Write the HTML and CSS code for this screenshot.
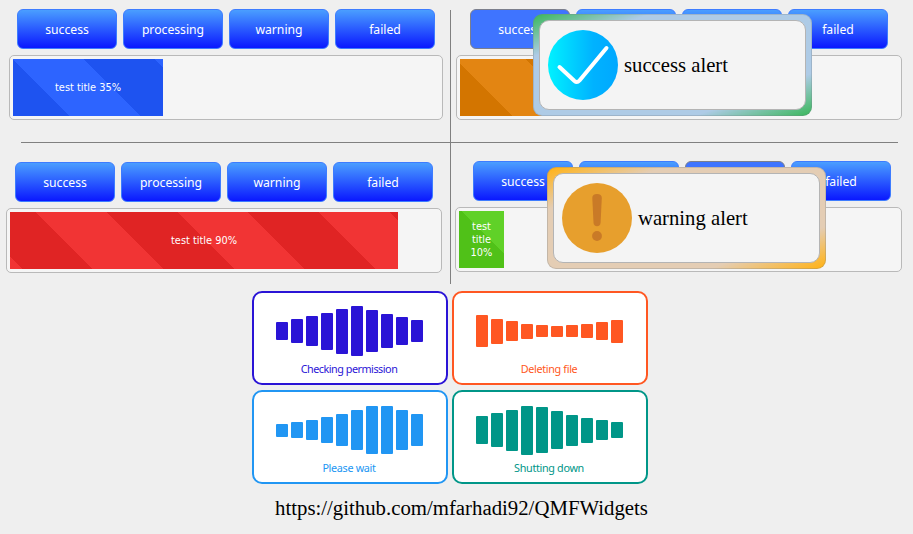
FILE: index.html
```html
<!DOCTYPE html>
<html lang="en">
<head>
<meta charset="utf-8">
<title>QMFWidgets</title>
<link rel="stylesheet" href="styles.css">
</head>
<body>
<main class="window">
  <div class="panels">
    <section class="panel panel-a">
      <div class="buttons"><button>success</button><button>processing</button><button>warning</button><button>failed</button></div>
      <div class="track"><div class="bar blue"><span>test title 35%</span></div></div>
    </section>
    <section class="panel panel-b">
      <div class="buttons"><button class="active">success</button><button>processing</button><button>warning</button><button>failed</button></div>
      <div class="track"><div class="bar orange"></div></div>
      <div class="alert alert-success">
        <div class="alert-body">
          <svg width="70" height="70" viewBox="0 0 70 70">
            <defs><linearGradient id="cyan"><stop offset="0" stop-color="#00f2ff"/><stop offset=".65" stop-color="#00b2ff"/><stop offset="1" stop-color="#00a8ff"/></linearGradient></defs>
            <circle cx="35" cy="35" r="35" fill="url(#cyan)"/>
            <path d="M11.5 37 L26.5 51 Q29 53.2 31.5 50.5 L58.5 18" fill="none" stroke="#fff" stroke-width="4" stroke-linecap="round" stroke-linejoin="round"/>
          </svg>
          <span>success alert</span>
        </div>
      </div>
    </section>
    <section class="panel panel-c">
      <div class="buttons"><button>success</button><button>processing</button><button>warning</button><button>failed</button></div>
      <div class="track"><div class="bar red"><span>test title 90%</span></div></div>
    </section>
    <section class="panel panel-d">
      <div class="buttons"><button>success</button><button>processing</button><button class="active">warning</button><button>failed</button></div>
      <div class="track"><div class="bar green"><span>test<br>title<br>10%</span></div></div>
      <div class="alert alert-warning">
        <div class="alert-body">
          <svg width="70" height="70" viewBox="0 0 70 70">
            <circle cx="35" cy="35" r="35" fill="#e79f2d"/>
            <path d="M30.3 15 Q30.3 11 35 11 Q39.8 11 39.8 15 L38.6 39.5 Q38.3 43.3 35 43.3 Q31.8 43.3 31.5 39.5 Z" fill="#c97a27"/>
            <circle cx="35" cy="53" r="4.9" fill="#c97a27"/>
          </svg>
          <span>warning alert</span>
        </div>
      </div>
    </section>
    <i class="rule-h"></i>
    <i class="rule-v"></i>
  </div>
  <div class="cards">
    <div class="card indigo">
      <div class="wave"><i style="height:18.7px"></i><i style="height:24px"></i><i style="height:30.3px"></i><i style="height:37px"></i><i style="height:45px"></i><i style="height:49.3px"></i><i style="height:41.3px"></i><i style="height:34.7px"></i><i style="height:27.3px"></i><i style="height:21.3px"></i></div>
      <p>Checking permission</p>
    </div>
    <div class="card coral">
      <div class="wave"><i style="height:31.3px"></i><i style="height:25px"></i><i style="height:19.3px"></i><i style="height:15px"></i><i style="height:12.7px"></i><i style="height:11px"></i><i style="height:12.3px"></i><i style="height:14.7px"></i><i style="height:17.7px"></i><i style="height:23px"></i></div>
      <p>Deleting file</p>
    </div>
    <div class="card sky">
      <div class="wave"><i style="height:13px"></i><i style="height:15.7px"></i><i style="height:20.3px"></i><i style="height:25.7px"></i><i style="height:32.7px"></i><i style="height:39.3px"></i><i style="height:47.3px"></i><i style="height:47.3px"></i><i style="height:39.3px"></i><i style="height:32.7px"></i></div>
      <p>Please wait</p>
    </div>
    <div class="card teal">
      <div class="wave"><i style="height:27.3px"></i><i style="height:33.3px"></i><i style="height:41px"></i><i style="height:49px"></i><i style="height:45.7px"></i><i style="height:38px"></i><i style="height:31px"></i><i style="height:25px"></i><i style="height:19.3px"></i><i style="height:15.3px"></i></div>
      <p>Shutting down</p>
    </div>
  </div>
  <footer>https://github.com/mfarhadi92/QMFWidgets</footer>
</main>
</body>
</html>
```
FILE: styles.css
```css
* { box-sizing: border-box; }
body {
  margin: 0;
  background: #efefef;
  font-family: "Noto Sans", "DejaVu Sans", sans-serif;
}
.window { width: 913px; height: 534px; overflow: hidden; }

.panels {
  position: relative;
  display: grid;
  grid-template-columns: 450px 463px;
  grid-template-rows: 142px 149px;
}
.panel { position: relative; }
.panel-a { padding: 9px 7px 0 9px; }
.panel-b { padding: 9px 11px 0 6px; }
.panel-c { padding: 20px 8px 0 6px; }
.panel-d { padding: 19px 11px 0 5px; }
.rule-h, .rule-v { position: absolute; background: #808080; }
.rule-h { left: 21px; top: 142px; width: 877px; height: 1px; }
.rule-v { left: 450px; top: 10px; width: 1px; height: 274px; }

.buttons { display: flex; gap: 6px; margin-bottom: 6px; }
.panel-a .buttons { padding-left: 8px; }
.panel-b .buttons { padding-left: 14px; }
.panel-c .buttons { padding-left: 9px; }
.panel-d .buttons { padding-left: 18px; }
button {
  width: 100px;
  height: 40px;
  padding: 0;
  border: 1px solid #3d7cff;
  border-radius: 6px;
  background: linear-gradient(#4a9eff, #0a18ff);
  color: #fff;
  font: inherit;
  font-size: 12.2px;
}
button.active { background: #3f74ff; border-color: #7c7f8c; }

.track {
  height: 65px;
  padding: 3px;
  border: 1px solid #b9b9b9;
  border-radius: 5px;
  background: #f5f5f5;
}
.bar {
  display: flex;
  align-items: center;
  justify-content: center;
  height: 57px;
  color: #fff;
  font-family: "DejaVu Sans Condensed", "DejaVu Sans", sans-serif;
  font-stretch: condensed;
  font-size: 10.9px;
  line-height: 13px;
  text-align: center;
  background: repeating-linear-gradient(45deg,
    var(--dark) var(--shift), var(--dark) calc(var(--shift) + 50px),
    var(--light) calc(var(--shift) + 50px), var(--light) calc(var(--shift) + 100px));
}
.blue { width: 150px; --dark: #1e53f0; --light: #2d64ff; --shift: -9.7px; }
.orange { width: 150px; --dark: #d37500; --light: #e38512; --shift: -13.2px; }
.red { width: 388px; --dark: #e02424; --light: #f13434; --shift: 8.5px; }
.green { width: 45px; --dark: #50c118; --light: #60d128; --shift: -7.6px; }

.alert {
  position: absolute;
  z-index: 2;
  width: 279px;
  height: 102px;
  padding: 5px;
  border: 1px solid rgba(120, 130, 140, .3);
  border-radius: 9px;
  background: linear-gradient(to bottom right, var(--edge) 2%, var(--mid) 21%, var(--mid) 79%, var(--edge) 98%) border-box;
}
.alert-success { left: 83px; top: 14px; --edge: #43b966; --mid: #aecbe6; }
.alert-warning { left: 97px; top: 25px; --edge: #ffb41e; --mid: #e4cdb4; }
.alert-body {
  display: flex;
  align-items: center;
  gap: 6px;
  height: 90px;
  padding-left: 8px;
  border: 1px solid #b4b4b4;
  border-radius: 10px;
  background: #f4f4f4;
  color: #000;
  font: 20.7px "Liberation Serif", serif;
}

.cards {
  display: grid;
  grid-template-columns: 196px 196px;
  grid-auto-rows: 94px;
  gap: 5px 4px;
  margin-left: 252px;
}
.card {
  padding-top: 12px;
  border: 2px solid var(--tone);
  border-radius: 10px;
  background: #fff;
  color: var(--tone);
}
.wave {
  display: flex;
  align-items: center;
  gap: 3.4px;
  height: 52px;
  padding-left: 22.3px;
}
.wave i { width: 11.6px; border-radius: 1px; background: var(--tone); }
.card p {
  margin: 5px 0 0;
  padding-right: 2px;
  font-size: 10.8px;
  line-height: 14px;
  letter-spacing: -.48px;
  text-align: center;
}
.coral p, .sky p, .teal p { letter-spacing: -.33px; }
.indigo { --tone: #2a14d6; }
.coral { --tone: #ff5722; }
.sky { --tone: #2196f3; }
.teal { --tone: #009688; }

footer {
  margin-top: 12px;
  padding-left: 10px;
  text-align: center;
  font: 20.8px/24px "Liberation Serif", serif;
}
```
